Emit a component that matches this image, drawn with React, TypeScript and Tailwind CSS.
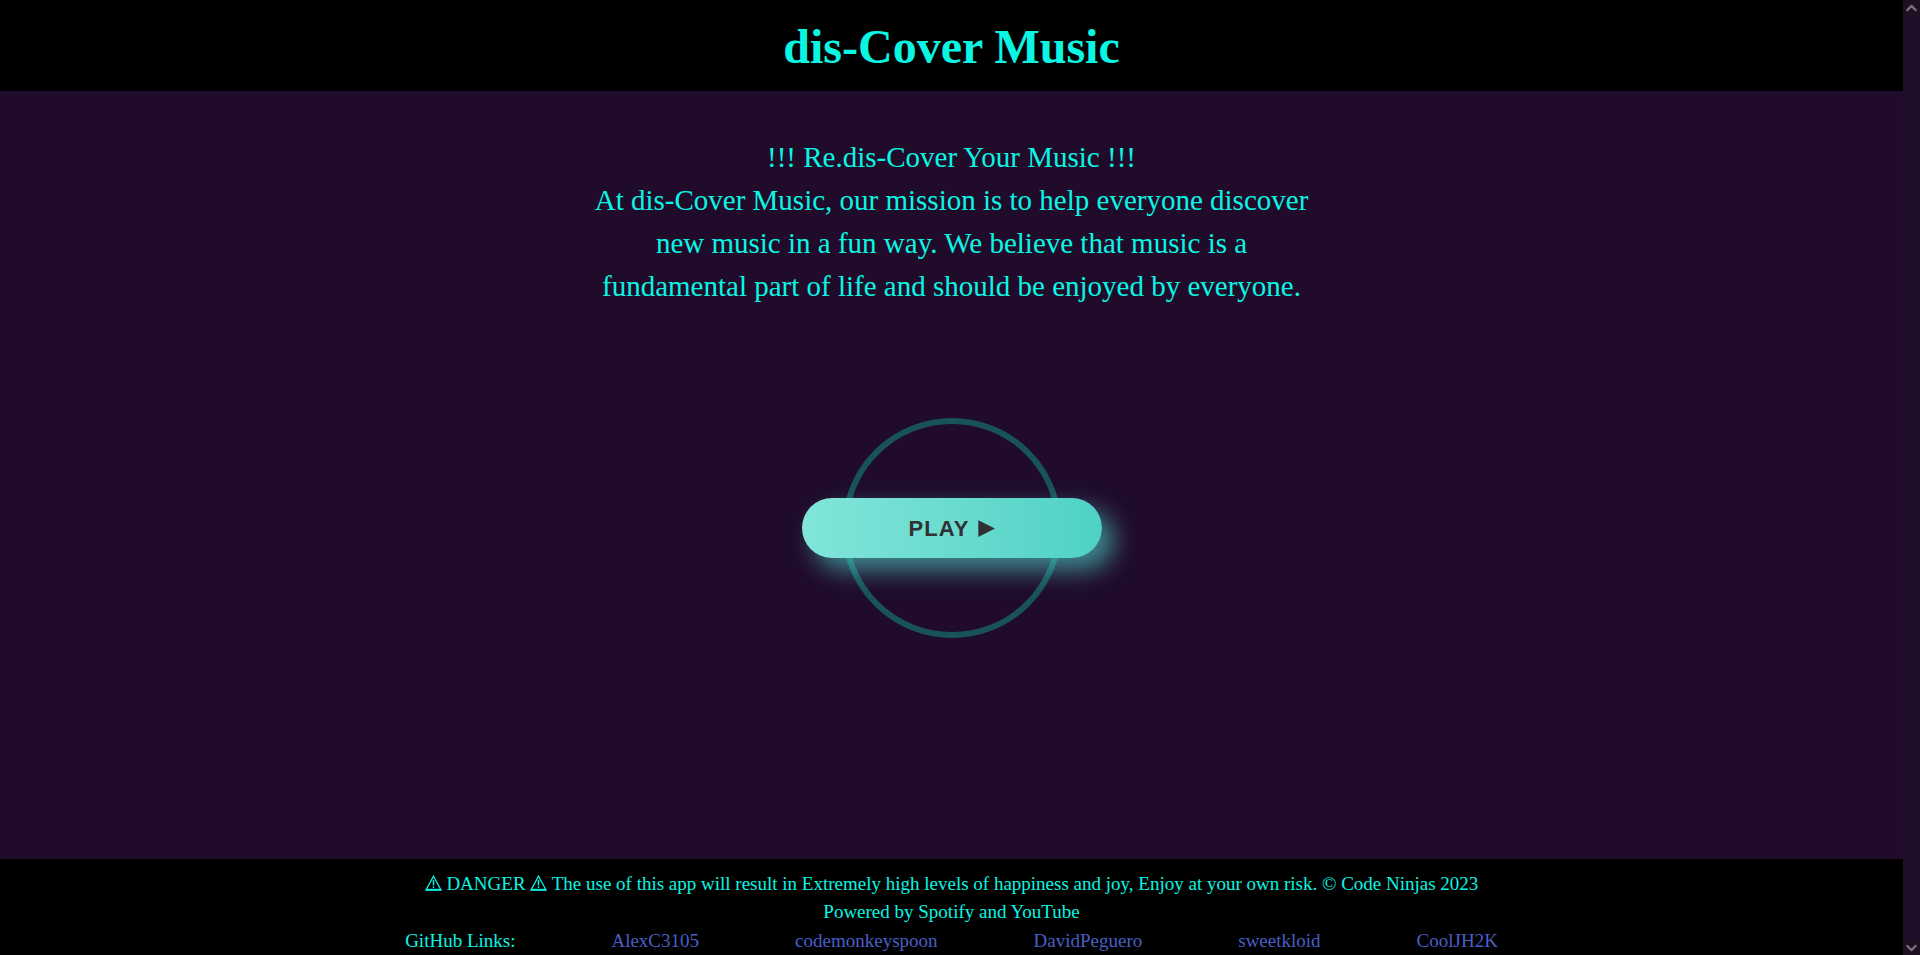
import React from "react";
import { ChevronDown, ChevronUp } from "lucide-react";

const members = ["AlexC3105", "codemonkeyspoon", "DavidPeguero", "sweetkloid", "CoolJH2K"];

function Warning() {
  return (
    <svg
      viewBox="0 0 17 16"
      role="img"
      aria-label="Warning"
      className="inline-block h-4 w-[17px] align-[-1px]"
      fill="none"
      stroke="currentColor"
    >
      <path d="M8.5 1.2 16 15H1Z" strokeWidth="1.3" />
      <path d="M1 14.6h15" strokeWidth="1.6" />
      <path d="M8.5 5v5.5M8.5 11.4v1.6" strokeWidth="1.5" />
    </svg>
  );
}

function ScrollTrack() {
  return (
    <div className="flex w-[17px] shrink-0 flex-col items-center justify-between bg-[#1f0f29] text-[#77707c]">
      <div className="flex h-[15px] w-full items-center justify-center bg-[#1f0f21]">
        <ChevronUp size={18} strokeWidth={3} />
      </div>
      <div className="flex h-[15px] w-full items-center justify-center bg-[#1f0f21]">
        <ChevronDown size={18} strokeWidth={3} />
      </div>
    </div>
  );
}

export default function App() {
  return (
    <div className="flex min-h-screen bg-[#200b2b] font-['Liberation_Serif',serif] text-[#0bf5e3]">
      <div className="flex min-w-0 grow flex-col">
        <header className="bg-black pt-2.5 pb-2 text-center">
          <h1 className="text-5xl leading-[73px] font-bold">dis-Cover Music</h1>
        </header>

        <main className="flex grow flex-col items-center pt-[45px]">
          <p className="max-w-[720px] text-center text-[29px] leading-[43px]">
            !!! Re.dis-Cover Your Music !!!
            <br />
            At dis-Cover Music, our mission is to help everyone discover new music in a fun way. We
            believe that music is a fundamental part of life and should be enjoyed by everyone.
          </p>

          <div className="mt-[110px] grid place-items-center">
            <span className="col-start-1 row-start-1 size-[220px] rounded-full border-6 border-[#18525a]" />
            <button
              type="button"
              className="z-10 col-start-1 row-start-1 flex h-[60px] w-[300px] items-center justify-center gap-2 rounded-full bg-linear-to-r from-[#81e6d9] to-[#4fd1c5] font-['Liberation_Sans',sans-serif] text-[22px] font-bold tracking-wider text-[#313133] uppercase shadow-[12px_12px_24px_rgba(79,209,197,0.64)]"
            >
              Play
              <svg viewBox="0 0 17 17" className="size-[17px]" fill="currentColor" aria-hidden="true">
                <path d="M0.3 0.3 17 8.5 0.3 16.9Z" />
              </svg>
            </button>
          </div>
        </main>

        <footer className="bg-black pt-[11px] text-center text-[19px] leading-7">
          <p>
            <Warning /> DANGER <Warning /> The use of this app will result in Extremely high levels of
            happiness and joy, Enjoy at your own risk. © Code Ninjas 2023
          </p>
          <p>Powered by Spotify and YouTube</p>
          <nav className="flex justify-center gap-24 pt-px" aria-label="GitHub">
            <span>GitHub Links:</span>
            {members.map((name) => (
              <a key={name} href={`#${name}`} className="text-[#485fc7]">
                {name}
              </a>
            ))}
          </nav>
        </footer>
      </div>
      <ScrollTrack />
    </div>
  );
}
